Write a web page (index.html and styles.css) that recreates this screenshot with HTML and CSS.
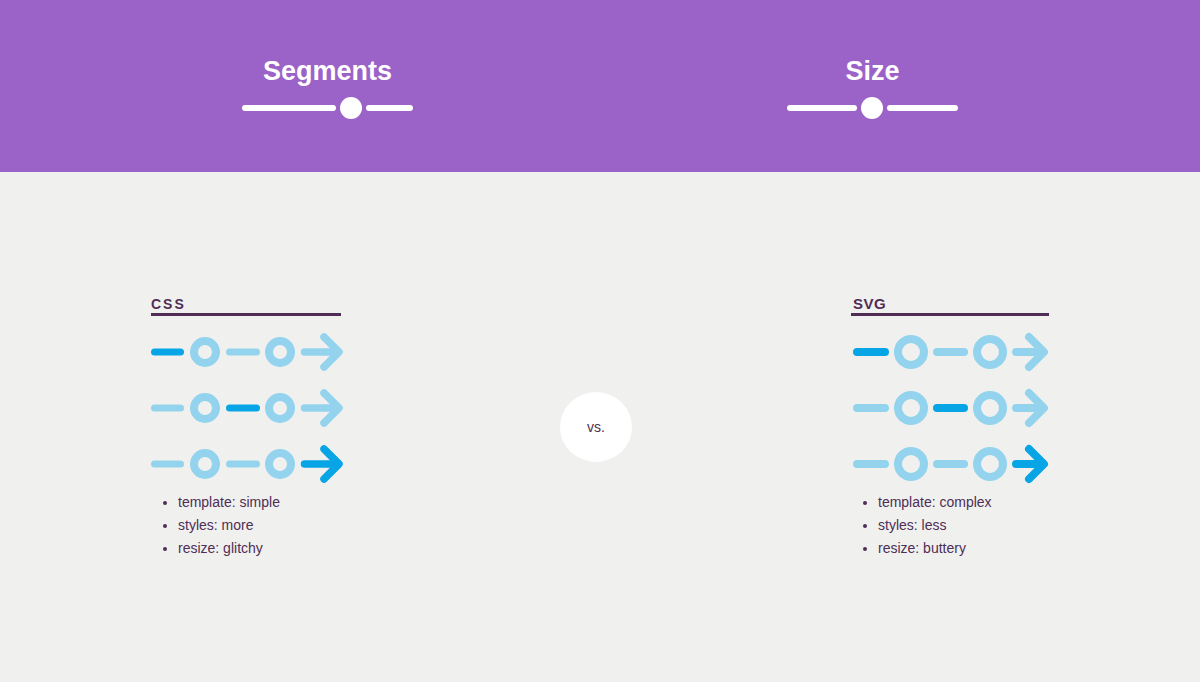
FILE: index.html
```html
<!DOCTYPE html>
<html lang="en">
<head>
  <meta charset="UTF-8" />
  <meta name="viewport" content="width=device-width, initial-scale=1.0"/>
  <title>CSS vs SVG progress</title>
  <link rel="stylesheet" href="styles.css">
</head>
<body>
  <header class="controls">
    <div class="control">
      <h2>Segments</h2>
      <div class="slider">
        <span class="track" style="width: 94px"></span>
        <span class="thumb"></span>
        <span class="track rest"></span>
      </div>
    </div>
    <div class="control">
      <h2>Size</h2>
      <div class="slider">
        <span class="track" style="width: 70px"></span>
        <span class="thumb"></span>
        <span class="track rest"></span>
      </div>
    </div>
  </header>

  <main class="compare">
    <section class="demo demo-css">
      <h3 class="label">CSS</h3>
      <div class="rows">
        <svg class="row" width="192" height="40" viewBox="0 0 192 40">
          <line class="on" x1="3.5" y1="20" x2="29.5" y2="20" stroke-width="7"/>
          <circle cx="54" cy="20" r="11" stroke-width="8"/>
          <line x1="78.5" y1="20" x2="105.5" y2="20" stroke-width="7"/>
          <circle cx="129" cy="20" r="11" stroke-width="8"/>
          <path d="M153.5 20 H186 M173 5 L188 20 L173 35" stroke-width="7.5"/>
        </svg>
        <svg class="row" width="192" height="40" viewBox="0 0 192 40">
          <line x1="3.5" y1="20" x2="29.5" y2="20" stroke-width="7"/>
          <circle cx="54" cy="20" r="11" stroke-width="8"/>
          <line class="on" x1="78.5" y1="20" x2="105.5" y2="20" stroke-width="7"/>
          <circle cx="129" cy="20" r="11" stroke-width="8"/>
          <path d="M153.5 20 H186 M173 5 L188 20 L173 35" stroke-width="7.5"/>
        </svg>
        <svg class="row" width="192" height="40" viewBox="0 0 192 40">
          <line x1="3.5" y1="20" x2="29.5" y2="20" stroke-width="7"/>
          <circle cx="54" cy="20" r="11" stroke-width="8"/>
          <line x1="78.5" y1="20" x2="105.5" y2="20" stroke-width="7"/>
          <circle cx="129" cy="20" r="11" stroke-width="8"/>
          <path class="on" d="M153.5 20 H186 M173 5 L188 20 L173 35" stroke-width="7.5"/>
        </svg>
      </div>
      <ul class="notes">
        <li>template: simple</li>
        <li>styles: more</li>
        <li>resize: glitchy</li>
      </ul>
    </section>

    <div class="vs">vs.</div>

    <section class="demo demo-svg">
      <h3 class="label">SVG</h3>
      <div class="rows">
        <svg class="row" width="198" height="40" viewBox="0 0 198 40">
          <line class="on" x1="6" y1="20" x2="34" y2="20" stroke-width="8"/>
          <circle cx="60" cy="20" r="13" stroke-width="8"/>
          <line x1="86" y1="20" x2="113" y2="20" stroke-width="8"/>
          <circle cx="139" cy="20" r="13" stroke-width="8"/>
          <path d="M165 20 H191 M178 5 L193 20 L178 35" stroke-width="8"/>
        </svg>
        <svg class="row" width="198" height="40" viewBox="0 0 198 40">
          <line x1="6" y1="20" x2="34" y2="20" stroke-width="8"/>
          <circle cx="60" cy="20" r="13" stroke-width="8"/>
          <line class="on" x1="86" y1="20" x2="113" y2="20" stroke-width="8"/>
          <circle cx="139" cy="20" r="13" stroke-width="8"/>
          <path d="M165 20 H191 M178 5 L193 20 L178 35" stroke-width="8"/>
        </svg>
        <svg class="row" width="198" height="40" viewBox="0 0 198 40">
          <line x1="6" y1="20" x2="34" y2="20" stroke-width="8"/>
          <circle cx="60" cy="20" r="13" stroke-width="8"/>
          <line x1="86" y1="20" x2="113" y2="20" stroke-width="8"/>
          <circle cx="139" cy="20" r="13" stroke-width="8"/>
          <path class="on" d="M165 20 H191 M178 5 L193 20 L178 35" stroke-width="8"/>
        </svg>
      </div>
      <ul class="notes">
        <li>template: complex</li>
        <li>styles: less</li>
        <li>resize: buttery</li>
      </ul>
    </section>
  </main>
</body>
</html>
```

FILE: styles.css
```css
body {
  margin: 0;
  font-family: "Liberation Sans", Arial, sans-serif;
  background: #f0f1ef;
  color: #4f2d55;
}

.controls {
  display: grid;
  grid-template-columns: 1fr 1fr;
  height: 172px;
  box-sizing: border-box;
  padding: 55px 55px 0;
  background: #9b63c8;
}

.control {
  display: flex;
  flex-direction: column;
  align-items: center;
}

.control h2 {
  margin: 0;
  font-size: 27px;
  line-height: 32px;
  font-weight: bold;
  color: #fff;
}

.slider {
  display: flex;
  align-items: center;
  width: 171px;
  height: 22px;
  margin-top: 10px;
}

.track {
  height: 6px;
  border-radius: 3px;
  background: #fff;
}

.track.rest {
  flex: 1;
}

.thumb {
  width: 22px;
  height: 22px;
  margin: 0 4px;
  border-radius: 50%;
  background: #fff;
}

.compare {
  display: flex;
  align-items: center;
  justify-content: space-between;
  height: 510px;
  padding: 0 151px;
}

.demo-css {
  width: 190px;
}

.demo-svg {
  width: 198px;
}

.label {
  margin: 0;
  padding: 2px 0 1px;
  font-size: 14px;
  line-height: 16px;
  font-weight: bold;
  border-bottom: 3px solid #4f2d55;
}

.demo-css .label {
  letter-spacing: 2px;
  font-weight: 600;
}

.demo-svg .label {
  font-size: 15px;
  letter-spacing: 0.5px;
  padding-left: 2px;
}

.rows {
  display: flex;
  flex-direction: column;
  gap: 16px;
  margin-top: 16px;
}

.row {
  display: block;
  overflow: visible;
}

.row line,
.row circle,
.row path {
  fill: none;
  stroke: #94d3ed;
  stroke-linecap: round;
  stroke-linejoin: round;
}

.row .on {
  stroke: #08a5e6;
}

.notes {
  margin: 7px 0 0;
  padding-left: 27px;
  font-size: 14px;
  line-height: 23px;
}

.vs {
  display: flex;
  align-items: center;
  justify-content: center;
  width: 72px;
  height: 70px;
  border-radius: 50%;
  background: #fff;
  font-size: 14px;
}
```
